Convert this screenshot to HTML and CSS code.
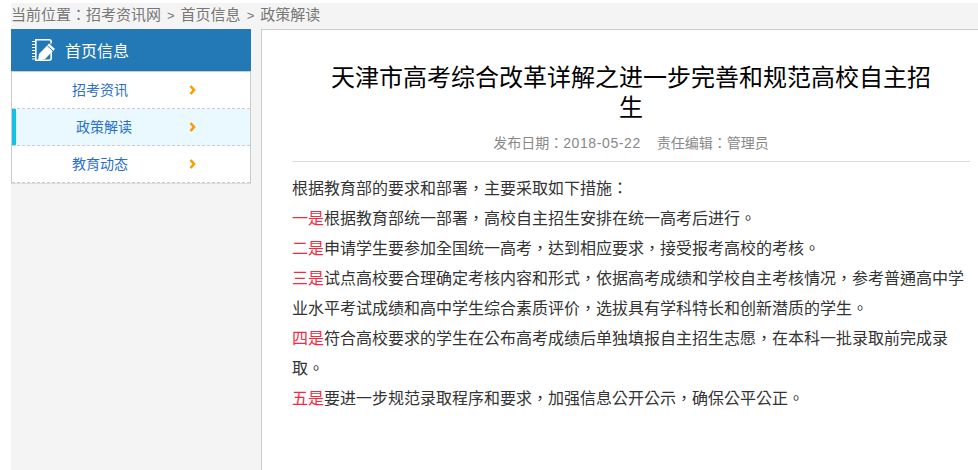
FILE: index.html
```html
<!DOCTYPE html>
<html lang="zh-Hant">
  <head>
    <meta charset="UTF-8" />
    <title>政策解读</title>
    <link rel="stylesheet" href="styles.css">
  </head>
  <body>
    <div class="wrap">
      <div class="crumb">当前位置：招考资讯网<span class="sep">&gt;</span>首页信息<span class="sep">&gt;</span>政策解读</div>
      <div class="main">
        <div class="side">
          <div class="side-head">
            <svg class="side-icon" width="24" height="24" viewBox="0 0 24 24">
              <path d="M4 1h14a3 3 0 0 1 3 3v1l-1.600 1.600V4A1.400 1.400 0 0 0 18 2.600H5.600v18.800H18a1.400 1.400 0 0 0 1.400-1.400v-5l1.600-1.600V20a3 3 0 0 1-3 3H4z" fill="#fff"/>
              <path d="M1 3.500h3.500M1 6.500h3.500M1 9.500h3.500M1 12.500h3.500M1 15.500h3.500M1 18.500h3.500M1 21h3.500" stroke="#fff" stroke-width="1.200"/>
              <path d="M7 23l1-7L18 5.500l6 5.500-10 10z" fill="#fff"/>
              <path d="M16.300 7.700l5.800 5.300" stroke="#2279b5" stroke-width="1"/>
            </svg>
            <span>首页信息</span>
          </div>
          <ul class="side-list">
            <li><a>招考资讯</a><svg class="arrow" width="7" height="10" viewBox="0 0 7 10"><path d="M1.500 1l3.500 4-3.500 4" fill="none" stroke="#f90" stroke-width="2.600"/></svg></li>
            <li class="on"><a>政策解读</a><svg class="arrow" width="7" height="10" viewBox="0 0 7 10"><path d="M1.500 1l3.500 4-3.500 4" fill="none" stroke="#f90" stroke-width="2.600"/></svg></li>
            <li><a>教育动态</a><svg class="arrow" width="7" height="10" viewBox="0 0 7 10"><path d="M1.500 1l3.500 4-3.500 4" fill="none" stroke="#f90" stroke-width="2.600"/></svg></li>
          </ul>
        </div>
        <div class="content">
          <h1>天津市高考综合改革详解之进一步完善和规范高校自主招生</h1>
          <div class="info">发布日期：<span class="num">2018-05-22</span><span class="editor">责任编辑：管理员</span></div>
          <div class="text">
            <p>根据教育部的要求和部署，主要采取如下措施：</p>
            <p><span class="red">一是</span>根据教育部统一部署，高校自主招生安排在统一高考后进行。</p>
            <p><span class="red">二是</span>申请学生要参加全国统一高考，达到相应要求，接受报考高校的考核。</p>
            <p><span class="red">三是</span>试点高校要合理确定考核内容和形式，依据高考成绩和学校自主考核情况，参考普通高中学业水平考试成绩和高中学生综合素质评价，选拔具有学科特长和创新潜质的学生。</p>
            <p><span class="red">四是</span>符合高校要求的学生在公布高考成绩后单独填报自主招生志愿，在本科一批录取前完成录取。</p>
            <p><span class="red">五是</span>要进一步规范录取程序和要求，加强信息公开公示，确保公平公正。</p>
          </div>
        </div>
      </div>
    </div>
  </body>
</html>
```

FILE: styles.css
```css
html, body {
  height: 100%;
}
body {
  margin: 0;
  font-family: "Liberation Sans", "Noto Sans CJK TC", sans-serif;
  background: #fff;
  overflow: hidden;
}
.wrap {
  margin: 3px 0 0 11px;
  background: #f4f4f4;
  height: 467px;
}
.crumb {
  height: 26px;
  line-height: 24px;
  font-size: 15px;
  color: #777;
}
.sep {
  margin: 0 6px;
  font-size: 13px;
}
.main {
  display: flex;
  height: 441px;
}
.side {
  width: 240px;
  margin-right: 10px;
}
.side-head {
  display: flex;
  align-items: center;
  height: 42px;
  padding-left: 20px;
  background: #2279b5;
  color: #fff;
  font-size: 16px;
}
.side-icon {
  margin-right: 10px;
}
.side-list {
  list-style: none;
  margin: 0;
  padding: 0;
  background: #fff;
  border: 1px solid #ccc;
  border-bottom-color: #ddd;
}
.side-list li {
  position: relative;
  height: 36px;
  line-height: 36px;
  border-bottom: 1px dashed #ccc;
  font-size: 14px;
  color: #2a6fc9;
  padding-left: 60px;
}
.side-list li.on {
  background: #e9f9ff;
  padding-left: 64px;
}
.side-list li.on::before {
  content: "";
  position: absolute;
  left: 0;
  top: 0;
  bottom: 0;
  width: 4px;
  background: #14c2e4;
}
.arrow {
  position: absolute;
  left: 177px;
  top: 13px;
}
.content {
  flex: 1;
  background: #fff;
  border-left: 1px solid #ccc;
  border-top: 1px solid #ccc;
  padding: 0 8px 0 30px;
}
h1 {
  margin: 0;
  padding: 33px 30px 0;
  font-size: 24px;
  font-weight: normal;
  line-height: 30px;
  text-align: center;
  color: #000;
}
.info {
  height: 33px;
  line-height: 30px;
  padding-top: 5px;
  border-bottom: 1px solid #ddd;
  text-align: center;
  font-size: 14px;
  color: #888;
}
.num {
  letter-spacing: 0.6px;
}
.editor {
  margin-left: 16px;
}
.text {
  padding: 12px 5px 0 0;
}
.text p {
  margin: 0;
  font-size: 16px;
  line-height: 30px;
  color: #333;
}
.red {
  color: #f5293f;
}
```
